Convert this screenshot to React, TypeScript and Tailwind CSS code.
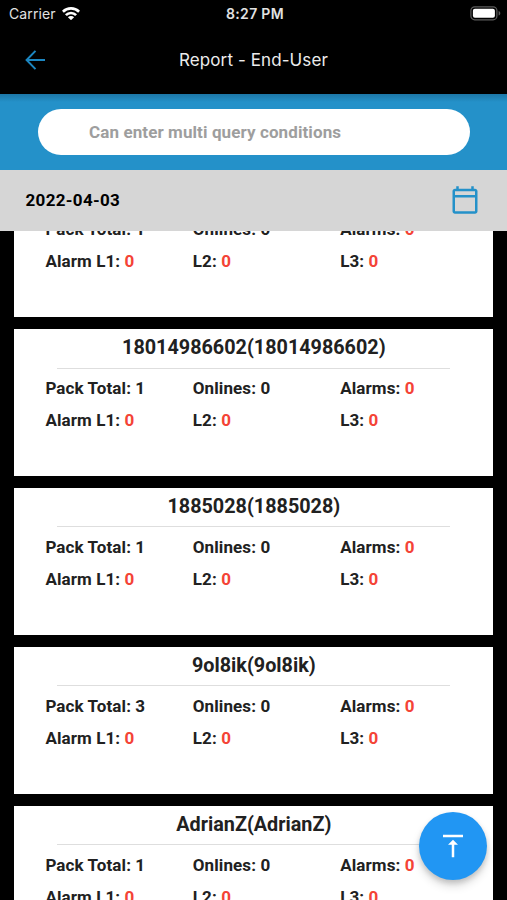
import { MdVerticalAlignTop } from 'react-icons/md';

type EndUser = {
  name: string;
  packTotal: number;
  onlines: number;
  alarms: number;
  levels: [number, number, number];
};

const users: EndUser[] = [
  { name: '18014986601', packTotal: 1, onlines: 0, alarms: 0, levels: [0, 0, 0] },
  { name: '18014986602', packTotal: 1, onlines: 0, alarms: 0, levels: [0, 0, 0] },
  { name: '1885028', packTotal: 1, onlines: 0, alarms: 0, levels: [0, 0, 0] },
  { name: '9ol8ik', packTotal: 3, onlines: 0, alarms: 0, levels: [0, 0, 0] },
  { name: 'AdrianZ', packTotal: 1, onlines: 0, alarms: 0, levels: [0, 0, 0] },
];

function StatusBar() {
  return (
    <div className="grid h-[27px] grid-cols-3 items-center pr-[6px] pl-[9px] font-['Inter',sans-serif] text-[14px] text-[#e2e2e2]">
      <div className="flex items-center gap-[6px]">
        <span className="tracking-[0.1px]">Carrier</span>
        <svg width="18" height="13" viewBox="0 0 18 13" fill="none" stroke="#fff" strokeWidth="2.7">
          <path d="M.9 4.700a11.600 11.600 0 0 1 16.200 0" />
          <path d="M3.900 8.100a7.200 7.200 0 0 1 10.200 0" />
          <path d="M9 13.200 5.900 10.200a4.400 4.400 0 0 1 6.200 0z" fill="#fff" stroke="none" />
        </svg>
      </div>
      <span className="text-center text-[14px] font-semibold tracking-[0.3px] whitespace-nowrap">8:27 PM</span>
      <svg className="justify-self-end" width="31" height="15" viewBox="0 0 31 15">
        <rect x=".9" y=".8" width="26" height="13" rx="3.8" fill="none" stroke="#5c5c5c" strokeWidth="1.2" />
        <rect x="2.9" y="2.8" width="22" height="9" rx="2" fill="#fff" />
        <path d="M28.6 5v4.6c1-.4 1.7-1.200 1.700-2.300s-.7-1.900-1.700-2.300z" fill="#5c5c5c" />
      </svg>
    </div>
  );
}

function NavBar() {
  return (
    <div className="grid h-[67px] grid-cols-[1fr_auto_1fr] items-center px-[25px]">
      <svg className="mb-[2px]" width="21" height="20" viewBox="0 0 21 20" fill="none" stroke="#1c86c0" strokeWidth="2">
        <path d="M20 10H2M10.500 .9 1.600 10l8.900 9.100" />
      </svg>
      <h1 className="font-['Inter',sans-serif] text-[17px] tracking-[0.1px] text-[#ececec]">Report - End-User</h1>
      <span />
    </div>
  );
}

function Stat({ label, value, alert = false }: { label: string; value: number; alert?: boolean }) {
  return (
    <span className="whitespace-nowrap">
      {label}: <span className={alert ? 'text-[#f44336]' : ''}>{value}</span>
    </span>
  );
}

function UserCard({ user }: { user: EndUser }) {
  return (
    <article className="h-[146.800px] shrink-0 bg-white text-[#212121]">
      <h2 className="pt-[5px] text-center text-[19.800px] leading-[28px] font-bold">
        {user.name}({user.name})
      </h2>
      <div className="mx-[43px] mt-[5.400px] h-px bg-[#dedede]" />
      <div className="ml-[31.100px] grid grid-cols-[147.400px_147.400px_1fr] pt-[3.600px] text-[17px] leading-[32px] font-bold tracking-[0.1px]">
        <Stat label="Pack Total" value={user.packTotal} />
        <Stat label="Onlines" value={user.onlines} />
        <Stat label="Alarms" value={user.alarms} alert />
        <Stat label="Alarm L1" value={user.levels[0]} alert />
        <Stat label="L2" value={user.levels[1]} alert />
        <Stat label="L3" value={user.levels[2]} alert />
      </div>
    </article>
  );
}

export default function App() {
  return (
    <div className="relative flex h-[900px] w-[507px] flex-col overflow-hidden bg-black font-['Roboto',sans-serif]">
      <StatusBar />
      <NavBar />

      <div className="h-[75.500px] shrink-0 bg-[#2491c9] bg-linear-to-b from-[#1d77a7] from-0% to-[#2491c9] to-[8px] px-[37.500px] pt-[14.500px]">
        <div className="flex h-[46px] items-center rounded-full bg-white pt-[2px] pl-[51.500px] text-[17px] font-bold tracking-[0.1px] text-[#9e9e9e]">
          Can enter multi query conditions
        </div>
      </div>

      <div className="flex h-[61px] shrink-0 items-center justify-between bg-[#d6d6d6] pr-[27px] pl-[25.500px]">
        <span className="pt-[2px] text-[17px] font-bold tracking-[0.32px] text-black">2022-04-03</span>
        <svg width="30" height="30" viewBox="0 0 24 24" fill="#2491c9">
          <path d="M20 3h-1V1h-2v2H7V1H5v2H4c-1.100 0-2 .9-2 2v16c0 1.100.9 2 2 2h16c1.100 0 2-.9 2-2V5c0-1.100-.9-2-2-2zm0 18H4V10h16v11zm0-13H4V5h16v3z" />
        </svg>
      </div>

      {/* scrolled list, the first card is partly under the date bar */}
      <div className="min-h-0 flex-1 overflow-hidden pr-[13.600px] pl-[14.300px]">
        <div className="-mt-[60.100px] flex flex-col gap-[12px]">
          {users.map((user) => (
            <UserCard key={user.name} user={user} />
          ))}
        </div>
      </div>

      <button
        type="button"
        aria-label="Back to top"
        className="absolute right-[19.800px] bottom-[19.800px] flex size-[68.500px] items-center justify-center rounded-full bg-[#2196f3] text-white shadow-[0_6px_10px_rgba(0,0,0,0.14),0_3px_5px_rgba(0,0,0,0.14)]"
      >
        <MdVerticalAlignTop size={30} />
      </button>
    </div>
  );
}
